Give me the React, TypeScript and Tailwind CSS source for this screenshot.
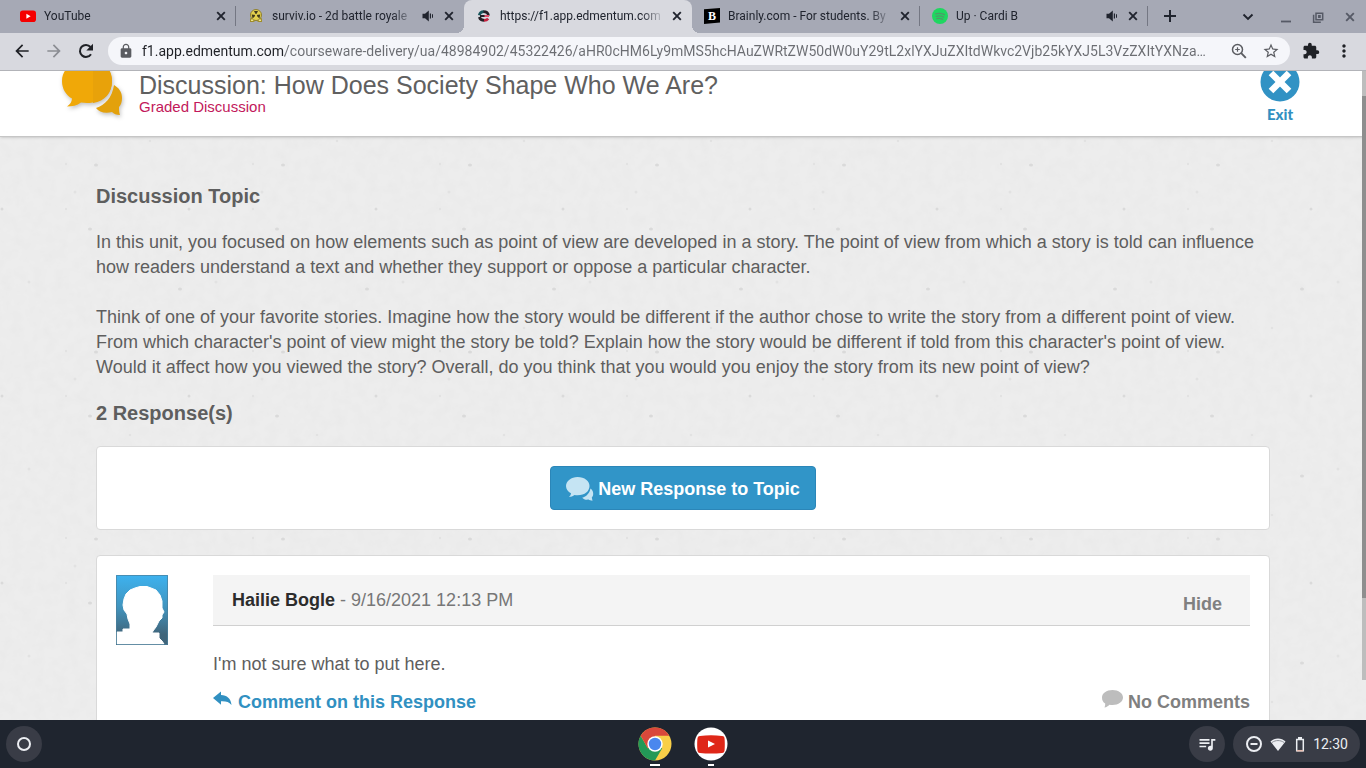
import type { ReactNode } from "react";
import { MdOutlineQueueMusic, MdStarOutline, MdExtension, MdMoreVert, MdLock, MdArrowBack, MdArrowForward } from "react-icons/md";

interface Tab {
  title: string;
  icon: ReactNode;
  audio?: boolean;
  active?: boolean;
  divider?: boolean;
}

const URL_TEXT =
  "f1.app.edmentum.com/courseware-delivery/ua/48984902/45322426/aHR0cHM6Ly9mMS5hcHAuZWRtZW50dW0uY29tL2xlYXJuZXItdWkvc2Vjb25kYXJ5L3VzZXItYXNza…";

function CloseIcon() {
  return (
    <svg viewBox="0 0 16 16" className="size-4" fill="none" stroke="currentColor" strokeWidth="1.9">
      <path d="M4.2 4.2l7.6 7.6M11.8 4.2l-7.6 7.6" />
    </svg>
  );
}

function SpeakerIcon() {
  return (
    <svg viewBox="0 0 16 16" className="size-4 shrink-0" fill="currentColor">
      <path d="M2.500 5.800h2.500L8.800 2.500v11L5 10.200H2.500z" />
      <path d="M9.800 5.500h1.200v5H9.800zM12 6.300h1v3.400h-1z" />
    </svg>
  );
}

function ReloadIcon() {
  return (
    <svg viewBox="0 0 20 20" className="size-5">
      <path d="M15 13.200A6 6 0 1 1 14.500 6" fill="none" stroke="currentColor" strokeWidth="2" />
      <path d="M17 2.800v6.700h-6.700z" fill="currentColor" />
    </svg>
  );
}

function ZoomIcon() {
  return (
    <svg viewBox="0 0 18 18" className="size-[18px]" fill="none" stroke="currentColor" strokeWidth="1.500">
      <circle cx="7.500" cy="7.500" r="5" />
      <path d="M11.200 11.200l4.600 4.600" strokeWidth="1.900" />
      <path d="M7.500 5.200v4.600M5.200 7.500h4.600" strokeWidth="1.200" />
    </svg>
  );
}

function YouTubeIcon() {
  return (
    <svg viewBox="0 0 16 16" className="size-4">
      <rect y="2.500" width="16" height="11.500" rx="2.800" fill="#f50000" />
      <path d="M6.400 5.800v5l4.200-2.500z" fill="#fff" />
    </svg>
  );
}

function SurvivIcon() {
  return (
    <svg viewBox="0 0 16 16" className="size-4">
      <path d="M2 10.500l2-1h8l2 1V14h-3.500L8 12.500 5.500 14H2z" fill="#a08d2a" />
      <circle cx="8" cy="7" r="5.500" fill="#e3d04e" stroke="#8f8030" />
      <path d="M8 7L6 3h4zM8 7l-4.300-.4.900 3.800zM8 7l4.300-.4-.9 3.800z" fill="#3f3a1c" />
      <circle cx="8" cy="7" r="1.200" fill="#e3d04e" />
      <path d="M3 11.500h2.200v1.500H3zM10.800 11.500H13V13h-2.200z" fill="#efe58c" />
    </svg>
  );
}

function EdmentumIcon() {
  return (
    <svg viewBox="0 0 16 16" className="size-4" fill="none" strokeWidth="2.700">
      <path d="M3.300 7.300C3.800 4.500 6 3.600 8 3.600" stroke="#16545a" />
      <path d="M7.500 3.600c3 0 4.700 1.400 5 4" stroke="#252027" />
      <path d="M4 8h5" stroke="#252027" strokeWidth="2" />
      <path d="M8.500 8h4.500" stroke="#e0506c" strokeWidth="2" />
      <path d="M3.300 9c.8 2.600 2.600 3.400 5 3.400" stroke="#252027" />
      <path d="M8 12.400c2 0 3.200-.5 4.200-1.700" stroke="#c4233f" />
    </svg>
  );
}

function BrainlyIcon() {
  return (
    <span className="flex size-4 items-center justify-center bg-black font-['Liberation_Serif',serif] text-xs leading-4 font-bold text-white [clip-path:polygon(0_8%,100%_0,100%_90%,0_100%)]">
      B
    </span>
  );
}

function SpotifyIcon() {
  return (
    <svg viewBox="0 0 16 16" className="size-4">
      <circle cx="8" cy="8" r="8" fill="#1fd760" />
      <path
        d="M3.700 5.900c3-.8 6-.5 8.700.8M4.200 8.300c2.600-.6 5.100-.4 7.400.8M4.800 10.600c2-.5 4-.3 6 .7"
        fill="none"
        stroke="#4f9a68"
        strokeWidth="1.300"
        strokeLinecap="round"
      />
    </svg>
  );
}

const tabs: Tab[] = [
  { title: "YouTube", icon: <YouTubeIcon />, divider: true },
  { title: "surviv.io - 2d battle royale", icon: <SurvivIcon />, audio: true },
  { title: "https://f1.app.edmentum.com", icon: <EdmentumIcon />, active: true },
  { title: "Brainly.com - For students. By", icon: <BrainlyIcon />, divider: true },
  { title: "Up · Cardi B", icon: <SpotifyIcon />, audio: true, divider: true },
];

function BrowserTab({ tab }: { tab: Tab }) {
  return (
    <div
      className={
        tab.active
          ? "relative flex h-full max-w-[228px] min-w-0 flex-1 items-center rounded-t-lg bg-[#d8d9df] pr-[7px] pb-px pl-3"
          : "relative flex h-full max-w-[228px] min-w-0 flex-1 items-center pr-[7px] pb-px pl-3"
      }
    >
      {tab.active && (
        <>
          <span className="absolute bottom-0 -left-2 size-2 bg-[radial-gradient(circle_at_0_0,#a6a9b5_8px,#d8d9df_8px)]" />
          <span className="absolute -right-2 bottom-0 size-2 bg-[radial-gradient(circle_at_100%_0,#a6a9b5_8px,#d8d9df_8px)]" />
        </>
      )}
      {tab.icon}
      <span className="ml-2 min-w-0 flex-1 [mask-image:linear-gradient(to_right,#000_calc(100%-24px),transparent)] text-xs whitespace-nowrap">
        {tab.title}
      </span>
      <span className="ml-1 flex gap-[5px]">
        {tab.audio && <SpeakerIcon />}
        <button type="button" aria-label="Close tab">
          <CloseIcon />
        </button>
      </span>
      {tab.divider && <span className="absolute top-[6px] right-0 h-5 w-px bg-[#747783]" />}
    </div>
  );
}

function TabStrip() {
  return (
    <div className="flex h-[33px] items-center bg-[#a6a9b5] pl-2 text-[#20242e]">
      {tabs.map((tab) => (
        <BrowserTab key={tab.title} tab={tab} />
      ))}
      <button type="button" aria-label="New tab" className="ml-3 pb-px">
        <svg viewBox="0 0 20 20" className="size-5" fill="none" stroke="currentColor" strokeWidth="2">
          <path d="M10 4v12M4 10h12" />
        </svg>
      </button>
      <div className="mr-2 ml-auto flex gap-4 text-[#565a66]">
        <button type="button" aria-label="Search tabs" className="mr-[6px] text-[#20242e]">
          <svg viewBox="0 0 16 16" className="size-4" fill="none" stroke="currentColor" strokeWidth="1.900">
            <path d="M3.500 5.500L8 10l4.500-4.500" />
          </svg>
        </button>
        <button type="button" aria-label="Minimize">
          <svg viewBox="0 0 16 16" className="size-4" stroke="currentColor" strokeWidth="1.800">
            <path d="M3 12.500h10" />
          </svg>
        </button>
        <button type="button" aria-label="Restore">
          <svg viewBox="0 0 16 16" className="size-4" fill="none" stroke="currentColor" strokeWidth="1.500">
            <path d="M6 4.200h6.700v6.600H6zM3.600 5.800v7.400h7.200M8.800 6.800h1.200v1.400H8.800z" />
          </svg>
        </button>
        <button type="button" aria-label="Close window">
          <CloseIcon />
        </button>
      </div>
    </div>
  );
}

function Toolbar() {
  return (
    <div className="flex h-[38px] items-center border-b border-[#b2b3b8] bg-[#d8d9df] px-3 pb-px text-[#1f2126]">
      <button type="button" aria-label="Back">
        <MdArrowBack className="size-5" />
      </button>
      <button type="button" aria-label="Forward" className="ml-3 text-[#8b8d93]">
        <MdArrowForward className="size-5" />
      </button>
      <button type="button" aria-label="Reload" className="ml-3">
        <ReloadIcon />
      </button>
      <div className="ml-3 flex h-7 min-w-0 flex-1 items-center rounded-full bg-[#f5f6fa] px-[10px] text-[#5a5c61]">
        <MdLock className="size-4 shrink-0" />
        <input
          aria-label="Address"
          readOnly
          value={URL_TEXT}
          className="mr-4 ml-2 min-w-0 flex-1 bg-[linear-gradient(to_right,#1f2126_143px,#6b6d72_143px)] bg-clip-text text-sm text-transparent outline-none"
        />
        <button type="button" aria-label="Zoom">
          <ZoomIcon />
        </button>
        <button type="button" aria-label="Bookmark this page" className="ml-[14px]">
          <MdStarOutline className="size-[18px]" />
        </button>
      </div>
      <button type="button" aria-label="Extensions" className="ml-3">
        <MdExtension className="size-[18px]" />
      </button>
      <button type="button" aria-label="Menu" className="ml-[14px]">
        <MdMoreVert className="size-5" />
      </button>
    </div>
  );
}

function PaperTexture() {
  return (
    <svg aria-hidden="true" className="absolute inset-0 size-full">
      <defs>
        <filter id="paper" x="0" y="0" width="100%" height="100%">
          <feTurbulence type="fractalNoise" baseFrequency="0.09" numOctaves="3" seed="4" />
          <feColorMatrix values="0 0 0 0 0.5  0 0 0 0 0.5  0 0 0 0 0.5  0.12 0 0 0 -0.04" />
        </filter>
        <pattern id="specks" width="187" height="187" patternUnits="userSpaceOnUse">
          <g fill="#dadada">
            <ellipse cx="96" cy="94" rx="2" ry="1.500" />
            <ellipse cx="90" cy="158" rx="2" ry="1.500" />
            <ellipse cx="180" cy="31" rx="2" ry="1.500" />
            <circle cx="2" cy="138" r="1.500" />
          </g>
          <g fill="#e2e2e2">
            <circle cx="75" cy="121" r="1.500" />
            <circle cx="66" cy="93" r="1.200" />
            <circle cx="66" cy="138" r="1.200" />
            <circle cx="29" cy="24" r="1.500" />
            <circle cx="130" cy="177" r="1.300" />
            <circle cx="150" cy="70" r="1.300" />
          </g>
        </pattern>
      </defs>
      <rect width="100%" height="100%" filter="url(#paper)" />
      <rect width="100%" height="100%" fill="url(#specks)" />
    </svg>
  );
}

function DiscussionIcon() {
  return (
    <svg viewBox="0 0 64 58" className="h-[58px] w-16 drop-shadow-[1px_2px_2px_rgba(0,0,0,0.25)]">
      <path d="M54 25c5 3 8 7 8 13 0 4-1 7-3 9 0 3 0 5 1 8-4 0-6-1-8-3-7 2-13 0-16-4 9-3 16-10 18-23z" fill="#e3a10c" />
      <path d="M27 0c14 0 25 9 25 21S43 43 27 43c-2 0-4 0-6-.4-4 3-9 4-14 4 3-2 5-5 5-8C6 35 2 29 2 21 2 9 13 0 27 0z" fill="#f0a808" />
      <path d="M33 0c12 1 19 10 19 21 0 12-7 20-19 22z" fill="#e8a20a" />
    </svg>
  );
}

function PageHeader() {
  return (
    <header className="relative flex h-[82px] border-b border-[#c6c6c6] bg-white pr-[66px] pl-[60px] shadow-sm">
      <div className="mt-[5px]">
        <DiscussionIcon />
      </div>
      <div className="mt-4 ml-[15px]">
        <h1 className="text-[25px] leading-7 text-[#606060]">Discussion: How Does Society Shape Who We Are?</h1>
        <p className="text-[15px] leading-4 text-[#c2185b]">Graded Discussion</p>
      </div>
      <a href="#exit" className="mt-[7px] ml-auto flex flex-col items-center text-[#3190c1]">
        <svg viewBox="0 0 40 40" className="size-10">
          <circle cx="20" cy="20" r="19.500" fill="#3192c4" />
          <path d="M11 11l18 18M29 11L11 29" stroke="#fff" strokeWidth="6.500" />
        </svg>
        <span className="mt-[2px] font-[Lato,sans-serif] text-[15px] leading-5 font-black">Exit</span>
      </a>
    </header>
  );
}

function BubblesIcon() {
  return (
    <svg viewBox="0 0 28 26" className="h-[26px] w-7" fill="#c5e4f3">
      <path d="M24.500 12.500c1.700 1 2.700 3 2.700 5.200 0 1.700-.6 3-1.400 3.800l.7 3.200c-1.700 0-3-.4-4-1.100-2.700.4-5-.3-6.300-1.900 4-1 7.300-4.200 8.300-9.200z" />
      <path d="M11.500 1C18.700 1 23.500 5 23.500 10s-4.500 9.300-12 9.300c-1 0-2-.1-3-.3-1.500 1.200-3.500 2-5.700 2 1.500-1 2.100-2.300 2.200-3.700C2 15.700 0 13 0 10c0-5 5.300-9 11.500-9z" />
    </svg>
  );
}

function Avatar() {
  return (
    <svg viewBox="0 0 52 70" role="img" aria-label="Profile picture" className="h-[70px] w-[52px] shrink-0">
      <defs>
        <linearGradient id="avatar-bg" x2="0" y2="1">
          <stop offset="0" stopColor="#3db2ef" />
          <stop offset="0.450" stopColor="#4195bf" />
          <stop offset="0.850" stopColor="#40657b" />
        </linearGradient>
      </defs>
      <rect width="52" height="70" fill="url(#avatar-bg)" />
      <path
        d="M1 69V57H7V54H14V49L12 44 11 39 8 35 7 30 8 24 10 19 14 15 19 13 24 11.500 31 11.500 35 13 40 15 44 20 46 26 46 33 48 37 46 40 46 43 43 46 40 52 37 56 36 58H43V63L46 66 48 69z"
        fill="#fff"
        stroke="#fff"
        strokeLinejoin="round"
      />
      <path d="M.5.5h51v69H.5z" fill="none" stroke="#4a7f9b" strokeOpacity="0.700" />
    </svg>
  );
}

function ResponseCard() {
  return (
    <article className="mt-[25px] flex gap-[45px] rounded border border-[#d9d9d9] bg-white p-[19px] pb-10">
      <Avatar />
      <div className="min-w-0 flex-1">
        <div className="flex h-[51px] justify-between border-b border-[#d0d0d0] bg-[#f4f4f4] pr-7 pl-[19px] leading-[25px]">
          <p className="mt-[13px] text-[#777]">
            <strong className="text-[#2c2c2c]">Hailie Bogle</strong> - 9/16/2021 12:13 PM
          </p>
          <button type="button" className="mt-2 font-bold text-[#808080]">
            Hide
          </button>
        </div>
        <p className="mt-[26px] leading-[25px]">I'm not sure what to put here.</p>
        <div className="mt-[13px] flex justify-between leading-[25px] font-bold">
          <a href="#comment" className="flex gap-[5px] text-[#3190c1]">
            <svg viewBox="0 0 20 18" className="h-[18px] w-5" fill="currentColor">
              <path d="M0 8l8-6.500V5c6 .3 10 3.500 10.500 10C16 11.800 13 11 8 11.200v3.600z" />
            </svg>
            Comment on this Response
          </a>
          <span className="flex gap-[5px] text-[#808080]">
            <svg viewBox="0 0 22 20" className="h-5 w-[22px]" fill="#bdbdbd">
              <path d="M11.500 0C17.500 0 22 3.300 22 7.500S17.500 15 11.500 15c-1 0-2 0-3-.2-1.500 1.400-3 2.500-5 2.700.6-1.300.8-2.500.7-4C2 12.300 1 10.200 1 7.500 1 3.300 5.500 0 11.500 0z" />
            </svg>
            No Comments
          </span>
        </div>
      </div>
    </article>
  );
}

function DiscussionPage() {
  return (
    <main className="relative min-h-0 flex-1 overflow-hidden bg-[#ededed] font-['Liberation_Sans',Arial,sans-serif] text-lg text-[#5e5e5e]">
      <PaperTexture />
      {/* page is scrolled down by 16px */}
      <div className="relative -mt-4">
        <PageHeader />
        <section className="px-24 pt-[45px]">
          <h2 className="text-xl leading-7 font-bold">Discussion Topic</h2>
          <p className="mt-5 leading-[25px]">
            In this unit, you focused on how elements such as point of view are developed in a story. The point of view from which a story is told can influence how readers understand a text and whether they support or oppose a particular character.
          </p>
          <p className="mt-[25px] leading-[25px]">
            Think of one of your favorite stories. Imagine how the story would be different if the author chose to write the story from a different point of view. From which character's point of view might the story be told? Explain how the story would be different if told from this character's point of view. Would it affect how you viewed the story? Overall, do you think that you would you enjoy the story from its new point of view?
          </p>
          <h2 className="mt-[19px] text-xl leading-7 font-bold">2 Response(s)</h2>
          <div className="mt-[19px] flex justify-center rounded border border-[#d9d9d9] bg-white p-[19px]">
            <button type="button" className="flex h-11 items-center gap-1 rounded border border-[#2b86b8] bg-[#3195c8] px-[15px] pt-px font-bold text-white">
              <BubblesIcon />
              New Response to Topic
            </button>
          </div>
          <ResponseCard />
        </section>
      </div>
      <div className="absolute top-0 right-0 h-[609px] w-1 bg-[#bdbdbd]">
        <div className="mt-[25px] h-[502px] bg-[#8e8e8e]" />
      </div>
    </main>
  );
}

function ChromeIcon() {
  return (
    <svg viewBox="0 0 34 34" className="size-[34px]">
      <circle cx="17" cy="17" r="16.500" fill="#f9cf48" />
      <path d="M17 17L2.700 8.750A16.500 16.500 0 0 1 31.300 8.750H17z" fill="#d9483b" />
      <path d="M2.700 8.750A16.500 16.500 0 0 0 17 33.500L24.200 21.200 17 17 9.800 21.200z" fill="#239957" />
      <path d="M2.700 8.750L9.800 21.200 17 17V8.750z" fill="#d9483b" />
      <circle cx="17" cy="17" r="7.700" fill="#fff" />
      <circle cx="17" cy="17" r="6.200" fill="#4a87ee" />
    </svg>
  );
}

function YouTubeAppIcon() {
  return (
    <svg viewBox="0 0 34 34" className="size-[34px]">
      <circle cx="17" cy="17" r="16.500" fill="#fff" />
      <path d="M6 9c7-1 15-1 22 0 2 .3 2.500 1 2.600 3 .3 4 .3 7 0 11-.2 2-.8 2.700-2.600 3-7 .8-15 .8-22 0-1.800-.3-2.400-1-2.600-3-.3-4-.3-7 0-11C3.600 10 4.200 9.300 6 9z" fill="#df2718" />
      <path d="M14 13.500v7l7-3.500z" fill="#fff" />
    </svg>
  );
}

function Shelf() {
  return (
    <footer className="grid h-12 grid-cols-[1fr_auto_1fr] items-center bg-[#1f252f] px-[6px] text-[#eceef2]">
      <button type="button" aria-label="Launcher" className="flex size-9 items-center justify-center rounded-full bg-[#393c46]">
        <span className="size-[14px] rounded-full border-2 border-[#eceef2]" />
      </button>
      <div className="flex gap-[22px]">
        <button type="button" aria-label="Google Chrome" className="relative">
          <ChromeIcon />
          <span className="absolute -bottom-[5px] left-3 h-[2px] w-[10px] bg-white" />
        </button>
        <button type="button" aria-label="YouTube" className="relative">
          <YouTubeAppIcon />
          <span className="absolute -bottom-[5px] left-[14px] h-[2px] w-[6px] bg-white" />
        </button>
      </div>
      <div className="flex justify-end gap-2">
        <button type="button" aria-label="Media controls" className="flex size-9 items-center justify-center rounded-full bg-[#393c46]">
          <MdOutlineQueueMusic className="size-5" />
        </button>
        <button type="button" aria-label="Status" className="flex h-9 items-center rounded-full bg-[#393c46] px-3 text-sm">
          <svg viewBox="0 0 18 18" className="size-[18px]" fill="none" stroke="currentColor" strokeWidth="2">
            <circle cx="9" cy="9" r="7" />
            <path d="M5.500 9h7" />
          </svg>
          <svg viewBox="0 0 18 18" className="ml-[6px] size-[18px]">
            <path d="M9 16L1.500 6.500C5.500 2.500 12.500 2.500 16.500 6.500z" fill="currentColor" />
            <path d="M3 7.500c3.500-2.600 8.500-2.600 12 0" fill="none" stroke="#8d9098" />
          </svg>
          <svg viewBox="0 0 18 18" className="ml-1 size-[18px]" fill="none" stroke="currentColor" strokeWidth="1.500">
            <path d="M5.700 4.500h6.600v11.200H5.700z" />
            <path d="M7 3h4" strokeWidth="2" />
            <path d="M5.700 15.700h6.600" stroke="#e8bcae" />
          </svg>
          <time className="ml-1">12:30</time>
        </button>
      </div>
    </footer>
  );
}

export default function App() {
  return (
    <div className="flex h-screen flex-col overflow-hidden font-[Roboto,sans-serif]">
      <TabStrip />
      <Toolbar />
      <DiscussionPage />
      <Shelf />
    </div>
  );
}
